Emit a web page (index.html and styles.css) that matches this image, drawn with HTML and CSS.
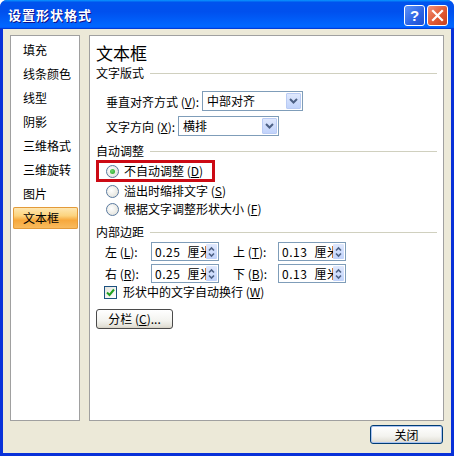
FILE: index.html
```html
<!DOCTYPE html>
<html lang="zh-CN">
<head>
    <meta charset="UTF-8">
    <title>设置形状格式</title>
    <link rel="stylesheet" href="styles.css">
</head>
<body>
<div class="window">
    <div class="titlebar">
        <span class="title">设置形状格式</span>
        <div class="title-buttons">
            <span class="tbtn help">?</span>
            <span class="tbtn close">
                <svg width="13" height="13" viewBox="0 0 13 13"><path d="M2 2 L11 11 M11 2 L2 11" stroke="#fff" stroke-width="2.2" stroke-linecap="square"/></svg>
            </span>
        </div>
    </div>
    <div class="client">
        <div class="panes">
            <!-- category list on the left -->
            <ul class="nav">
                <li>填充</li>
                <li>线条颜色</li>
                <li>线型</li>
                <li>阴影</li>
                <li>三维格式</li>
                <li>三维旋转</li>
                <li>图片</li>
                <li class="selected">文本框</li>
            </ul>
            <div class="page">
                <div class="page-title">文本框</div>

                <div class="section">文字版式<span class="rule"></span></div>
                <div class="field row-valign">
                    <span class="label">垂直对齐方式 (<u>V</u>):</span>
                    <div class="select wide">
                        <span class="value">中部对齐</span>
                        <span class="drop"><svg width="9" height="6" viewBox="0 0 9 6"><path d="M1 1 L4.5 4.5 L8 1" fill="none" stroke="#4d6185" stroke-width="2"/></svg></span>
                    </div>
                </div>
                <div class="field row-dir">
                    <span class="label">文字方向 (<u>X</u>):</span>
                    <div class="select narrow">
                        <span class="value">横排</span>
                        <span class="drop"><svg width="9" height="6" viewBox="0 0 9 6"><path d="M1 1 L4.5 4.5 L8 1" fill="none" stroke="#4d6185" stroke-width="2"/></svg></span>
                    </div>
                </div>

                <div class="section auto">自动调整<span class="rule"></span></div>
                <div class="highlight">
                    <div class="radio-row"><span class="radio checked"></span>不自动调整 (<u>D</u>)</div>
                </div>
                <div class="radio-row second"><span class="radio"></span>溢出时缩排文字 (<u>S</u>)</div>
                <div class="radio-row third"><span class="radio"></span>根据文字调整形状大小 (<u>F</u>)</div>

                <div class="section margins">内部边距<span class="rule"></span></div>
                <div class="spin-row first">
                    <span class="spin-label">左 (<u>L</u>):</span>
                    <div class="spin"><span class="value">0.25 厘米</span><span class="arrows"><svg width="7" height="12" viewBox="0 0 7 12"><path d="M1 4.5 L3.5 2 L6 4.5 M1 7.5 L3.5 10 L6 7.5" fill="none" stroke="#4d6185" stroke-width="1.6"/></svg></span></div>
                    <span class="spin-label right">上 (<u>T</u>):</span>
                    <div class="spin"><span class="value">0.13 厘米</span><span class="arrows"><svg width="7" height="12" viewBox="0 0 7 12"><path d="M1 4.5 L3.5 2 L6 4.5 M1 7.5 L3.5 10 L6 7.5" fill="none" stroke="#4d6185" stroke-width="1.6"/></svg></span></div>
                </div>
                <div class="spin-row">
                    <span class="spin-label">右 (<u>R</u>):</span>
                    <div class="spin"><span class="value">0.25 厘米</span><span class="arrows"><svg width="7" height="12" viewBox="0 0 7 12"><path d="M1 4.5 L3.5 2 L6 4.5 M1 7.5 L3.5 10 L6 7.5" fill="none" stroke="#4d6185" stroke-width="1.6"/></svg></span></div>
                    <span class="spin-label right">下 (<u>B</u>):</span>
                    <div class="spin"><span class="value">0.13 厘米</span><span class="arrows"><svg width="7" height="12" viewBox="0 0 7 12"><path d="M1 4.5 L3.5 2 L6 4.5 M1 7.5 L3.5 10 L6 7.5" fill="none" stroke="#4d6185" stroke-width="1.6"/></svg></span></div>
                </div>
                <div class="check-row">
                    <span class="checkbox"><svg width="9" height="9" viewBox="0 0 9 9"><path d="M1 4.5 L3.5 7 L8 1.5" fill="none" stroke="#21a121" stroke-width="2"/></svg></span>
                    形状中的文字自动换行 (<u>W</u>)
                </div>
                <button class="btn columns">分栏 (<u>C</u>)...</button>
            </div>
        </div>
        <div class="footer">
            <button class="btn default">关闭</button>
        </div>
    </div>
</div>
</body>
</html>
```

FILE: styles.css
```css
body {
    margin: 0;
    padding: 0;
    background-color: #ffffff;
    font-family: "Noto Sans CJK SC", "Liberation Sans", sans-serif;
    font-size: 12px;
    color: #000;
}

.window {
    width: 454px;
    height: 456px;
    display: flex;
    flex-direction: column;
    background-color: #0831d9; /* XP frame blue */
    border-radius: 7px 7px 0 0;
    overflow: hidden;
}

/* title bar */
.titlebar {
    height: 29px;
    flex: none;
    display: flex;
    align-items: center;
    justify-content: space-between;
    padding: 0 6px 0 8px;
    background: linear-gradient(180deg, #0997ff, #0053ee 8%, #0050ee 40%, #0066ff 88%, #0066ff 93%, #005bff 95%, #003dd7 96%, #003dd7);
}
.title {
    color: #fff;
    font-weight: bold;
    font-size: 13px;
    letter-spacing: 1px;
    text-shadow: 1px 1px #0f1089;
    line-height: 29px;
}
.title-buttons {
    display: flex;
    gap: 2px;
    margin-top: 1px;
}
.tbtn {
    width: 19px;
    height: 19px;
    border: 1px solid #fff;
    border-radius: 3px;
    display: flex;
    align-items: center;
    justify-content: center;
    color: #fff;
    font-family: "Liberation Sans", sans-serif;
    font-weight: bold;
    font-size: 15px;
}
.tbtn.help {
    background: linear-gradient(135deg, #5d93f8, #2c63e4 60%, #1e4fd0);
}
.tbtn.close {
    background: linear-gradient(135deg, #f19279, #e05a34 55%, #c8401c);
}

/* client area */
.client {
    flex: 1;
    margin: 0 3px 3px 3px;
    background-color: #ece9d8;
    padding: 6px 7px 9px 7px;
    display: flex;
    flex-direction: column;
}
.panes {
    height: 386px;
    display: flex;
    gap: 9px;
}

.nav {
    width: 68px;
    margin: 0;
    padding: 2px 0 0 0;
    list-style: none;
    background-color: #fff;
    border: 1px solid #a0a0a0;
}
.nav li {
    height: 24px;
    line-height: 24px;
    padding-left: 12px;
    white-space: nowrap;
}
.nav li.selected {
    height: 22px;
    line-height: 22px;
    margin: 1px 1px 1px 2px;
    padding-left: 10px;
    border-radius: 2px;
    background: linear-gradient(180deg, #fee9b8 0%, #fcd37e 40%, #f7a83c 60%, #f9bd62 100%);
    box-shadow: inset 0 0 0 1px #e39a3a;
}

.page {
    flex: 1;
    background-color: #fff;
    border: 1px solid #a0a0a0;
    padding: 6px 6px 0 6px;
}
.page-title {
    font-size: 17px;
    line-height: 22px;
    height: 22px;
}
.section {
    display: flex;
    align-items: center;
    gap: 6px;
    height: 16px;
    line-height: 16px;
    margin-top: 1px;
}
.section .rule {
    flex: 1;
    height: 1px;
    background-color: #d0d0bf;
}
.section.auto {
    margin-top: 7px;
}
.section.margins {
    margin-top: 7px;
}

/* dropdown rows */
.field {
    display: flex;
    align-items: center;
    padding-left: 10px;
    height: 20px;
}
.row-valign {
    margin-top: 10px;
}
.row-dir {
    margin-top: 5px;
}
.label {
    white-space: nowrap;
    width: 96px;
}
.row-dir .label {
    width: 72px;
}
.select {
    width: 101px;
    height: 20px;
    box-sizing: border-box;
    border: 1px solid #7f9db9;
    display: flex;
    align-items: center;
    justify-content: space-between;
    padding: 1px;
}
.select .value {
    padding-left: 3px;
    line-height: 16px;
}
.drop {
    width: 15px;
    height: 16px;
    display: flex;
    align-items: center;
    justify-content: center;
    background: linear-gradient(180deg, #dfe8fd, #c1d3fb);
    border: 1px solid #b9cbf4;
    box-sizing: border-box;
    border-radius: 1px;
}

/* radios */
.highlight {
    width: 119px;
    height: 22px;
    box-sizing: border-box;
    border: 3px solid #cc0a14;
    margin-top: 1px;
    display: flex;
    align-items: center;
    padding-left: 7px;
}
.radio-row {
    display: flex;
    align-items: center;
    height: 16px;
    line-height: 16px;
    white-space: nowrap;
}
.radio-row.second {
    margin-top: 1px;
    padding-left: 10px;
}
.radio-row.third {
    margin-top: 2px;
    padding-left: 10px;
}
.radio {
    width: 13px;
    height: 13px;
    box-sizing: border-box;
    border: 1px solid #5a7aa0;
    border-radius: 50%;
    background: radial-gradient(circle at 40% 40%, #fff, #e3e3dc 80%);
    margin-right: 5px;
    position: relative;
}
.radio.checked::after {
    content: "";
    position: absolute;
    left: 3px;
    top: 3px;
    width: 5px;
    height: 5px;
    border-radius: 50%;
    background: radial-gradient(circle at 40% 40%, #6fd86f, #21a121);
}

/* internal margins */
.spin-row {
    display: flex;
    align-items: center;
    height: 19px;
    margin-top: 3px;
    padding-left: 9px;
}
.spin-row.first {
    margin-top: 2px;
}
.spin-label {
    width: 46px;
    white-space: nowrap;
}
.spin-label.right {
    width: 45px;
    margin-left: 14px;
}
.spin {
    width: 68px;
    height: 19px;
    box-sizing: border-box;
    border: 1px solid #7f9db9;
    display: flex;
    align-items: center;
    padding: 1px;
    overflow: hidden;
}
.spin .value {
    flex: 1;
    overflow: hidden;
    white-space: nowrap;
    padding-left: 2px;
    line-height: 15px;
    letter-spacing: 0.5px;
    word-spacing: 4px;
}
.arrows {
    width: 11px;
    height: 15px;
    flex: none;
    display: flex;
    align-items: center;
    justify-content: center;
    background: linear-gradient(180deg, #dfe8fd, #c1d3fb);
    border-radius: 1px;
}

.check-row {
    display: flex;
    align-items: center;
    height: 14px;
    line-height: 14px;
    margin-top: 2px;
    padding-left: 8px;
    white-space: nowrap;
}
.checkbox {
    width: 13px;
    height: 13px;
    box-sizing: border-box;
    border: 1px solid #1c5180;
    background: linear-gradient(135deg, #e3e3dc, #fff);
    display: flex;
    align-items: center;
    justify-content: center;
    margin-right: 6px;
}

/* buttons */
.btn {
    font-family: "Noto Sans CJK SC", sans-serif;
    font-size: 12px;
    line-height: 16px;
    padding: 0;
    border: 1px solid #003c74;
    border-radius: 3px;
    background: linear-gradient(180deg, #ffffff, #f3f3ef 60%, #e3e1d8 90%, #d6d0c5);
    color: #000;
}
.btn.columns {
    display: block;
    margin-top: 10px;
    width: 77px;
    height: 20px;
    border-color: #4a4a4a;
}
.footer {
    margin-top: 4px;
    display: flex;
    justify-content: flex-end;
    padding-right: 1px;
}
.btn.default {
    width: 73px;
    height: 19px;
    box-shadow: inset 0 0 0 1px #aac4f2;
}
```
